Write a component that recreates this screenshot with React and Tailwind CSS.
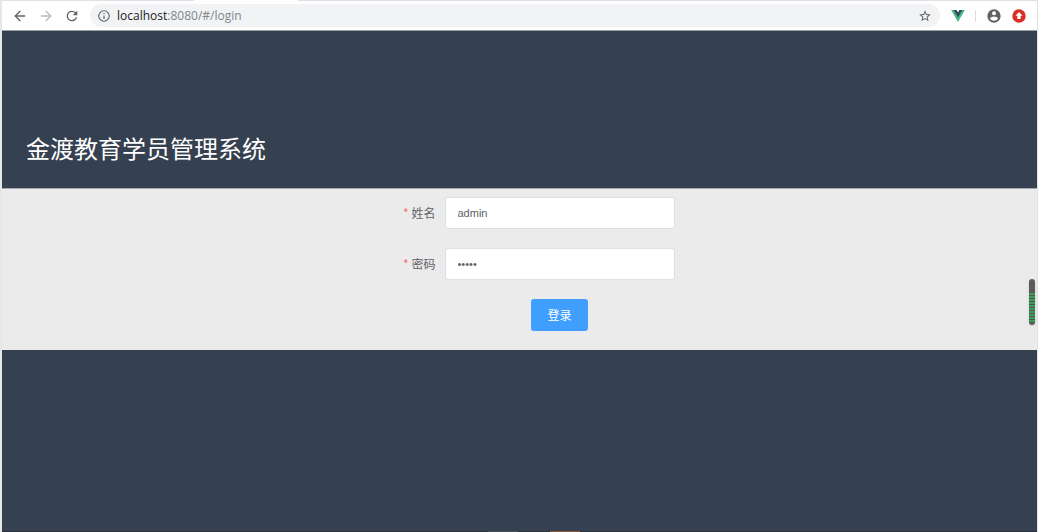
import { useState } from "react";
import { ArrowLeft, ArrowRight } from "lucide-react";

const ReloadIcon = () => (
  <svg viewBox="0 0 24 24" className="size-4 fill-[#5f6368]" aria-hidden="true">
    <path d="M17.65 6.35A7.96 7.96 0 0 0 12 4a8 8 0 1 0 7.73 10h-2.08A6 6 0 1 1 12 6c1.66 0 3.14.69 4.22 1.78L13 11h7V4l-2.35 2.35z" />
  </svg>
);

const InfoIcon = () => (
  <svg viewBox="0 0 24 24" className="size-3.5 shrink-0 fill-[#5f6368]" aria-hidden="true">
    <path d="M11 7h2v2h-2zm0 4h2v6h-2zm1-9a10 10 0 1 0 0 20 10 10 0 0 0 0-20zm0 18a8 8 0 1 1 0-16 8 8 0 0 1 0 16z" />
  </svg>
);

const StarIcon = () => (
  <svg viewBox="0 0 24 24" className="size-3.5 fill-[#5f6368]" aria-hidden="true">
    <path d="M22 9.24l-7.19-.62L12 2 9.19 8.63 2 9.24l5.46 4.73L5.82 21 12 17.27 18.18 21l-1.63-7.03L22 9.24zM12 15.4l-3.76 2.27 1-4.28-3.32-2.88 4.38-.38L12 6.1l1.71 4.04 4.38.38-3.32 2.88 1 4.28L12 15.4z" />
  </svg>
);

const VueIcon = () => (
  <svg viewBox="0 0 24 21" className="h-3 w-3.5" aria-hidden="true">
    <path d="M0 0h5.500L12 11.500 18.500 0H24L12 20.8z" fill="#41b883" />
    <path d="M4.5 0h5L12 4.500 14.500 0h5L12 13z" fill="#35495e" />
  </svg>
);

const UserIcon = () => (
  <svg viewBox="0 0 24 24" className="size-4 fill-[#5f6368]" aria-hidden="true">
    <path d="M12 2a10 10 0 1 0 0 20 10 10 0 0 0 0-20zm0 3a3 3 0 1 1 0 6 3 3 0 0 1 0-6zm0 14.2a7.2 7.2 0 0 1-6-3.22c.03-1.99 4-3.08 6-3.08s5.97 1.09 6 3.08a7.2 7.2 0 0 1-6 3.22z" />
  </svg>
);

const UpdateIcon = () => (
  <svg viewBox="0 0 24 24" className="size-3.5" aria-hidden="true">
    <circle cx="12" cy="12" r="11.5" fill="#d93025" />
    <path d="M12 5l6 6.500h-3.200V17H9.200v-5.500H6z" fill="#fff" />
  </svg>
);

const BrowserBar = () => (
  <div className="bg-white">
    {/* Tab strip edge */}
    <div className="flex h-px bg-[#dee1e6]">
      <div className="ml-48 w-26 bg-white" />
    </div>

    <div className="flex h-[29px] items-center pr-[11px] pl-2.5">
      <div className="flex items-center gap-2.5">
        <button type="button" aria-label="Back">
          <ArrowLeft className="size-4 text-[#5f6368]" />
        </button>
        <button type="button" aria-label="Forward">
          <ArrowRight className="size-4 text-[#babcbe]" />
        </button>
        <button type="button" aria-label="Reload">
          <ReloadIcon />
        </button>
      </div>

      <div className="ml-2.5 flex h-[23px] flex-1 items-center rounded-full bg-[#f1f3f4] pr-2 pl-[7px]">
        <InfoIcon />
        <p className="ml-1.5 flex-1 font-['Open_Sans',sans-serif] text-xs text-[#80868b]">
          <span className="text-[#202124]">localhost</span>:8080/#/login
        </p>
        <button type="button" aria-label="Bookmark">
          <StarIcon />
        </button>
      </div>

      <div className="ml-[11px] flex items-center gap-2.5">
        <button type="button" aria-label="Vue devtools">
          <VueIcon />
        </button>
        <div className="h-3 w-px bg-[#dadce0]" />
        <button type="button" aria-label="Profile">
          <UserIcon />
        </button>
        <button type="button" aria-label="Update">
          <UpdateIcon />
        </button>
      </div>
    </div>
  </div>
);

const FormItem = ({ id, label, type, value, onChange }) => (
  <div className="mb-[19px] flex items-center">
    <label htmlFor={id} className="w-20 pr-[9px] text-right text-xs text-[#606266]">
      <span className="mr-[3px] text-[#f56c6c]">*</span>
      {label}
    </label>
    <input
      id={id}
      type={type}
      value={value}
      onChange={(e) => onChange(e.target.value)}
      className="h-8 min-w-0 flex-1 rounded-[3px] border border-[#dcdfe6] bg-white px-3 font-['Liberation_Sans',sans-serif] text-[11px] text-[#606266] outline-none"
    />
  </div>
);

const LoginForm = () => {
  const [name, setName] = useState("admin");
  const [password, setPassword] = useState("admin");

  return (
    <form
      className="mx-auto w-[310px] max-w-full"
      onSubmit={(e) => e.preventDefault()}
    >
      <FormItem id="name" label="姓名" type="text" value={name} onChange={setName} />
      <FormItem id="password" label="密码" type="password" value={password} onChange={setPassword} />
      <div className="ml-20 flex justify-center">
        <button
          type="submit"
          className="h-8 rounded-[3px] bg-[#409eff] px-4 text-xs text-white"
        >
          登录
        </button>
      </div>
    </form>
  );
};

const App = () => {
  return (
    <div className="flex min-h-screen flex-col border-r border-l-2 border-r-[#dfe1e5] border-l-[#e6e6e6] bg-[#354050] font-['Noto_Sans_CJK_SC',sans-serif]">
      <BrowserBar />

      <header className="border-t border-[#9a9fa6] px-6 pt-[99px] pb-[22px]">
        <h1 className="text-2xl leading-9 text-white">金渡教育学员管理系统</h1>
      </header>

      <main className="relative border-t border-[#a4a9b0] bg-[#ebebeb] pt-2 pb-[19px]">
        <LoginForm />

        {/* Level meter on the right edge */}
        <div className="absolute top-[90px] right-0.5 h-[46px] w-1.5 overflow-hidden rounded-full bg-[#5c5c5c] pt-3.5 shadow-sm">
          <div className="h-[30px] bg-[repeating-linear-gradient(#3d9a5c_0px,#3d9a5c_2px,#4c5c50_2px,#4c5c50_3px)]" />
        </div>
      </main>

      <div className="mt-auto flex h-px bg-[#2a323c]">
        <div className="ml-[47%] w-[30px] bg-[#4a5058]" />
        <div className="ml-8 w-[30px] bg-[#8a5a3c]" />
      </div>
    </div>
  );
};

export default App;
